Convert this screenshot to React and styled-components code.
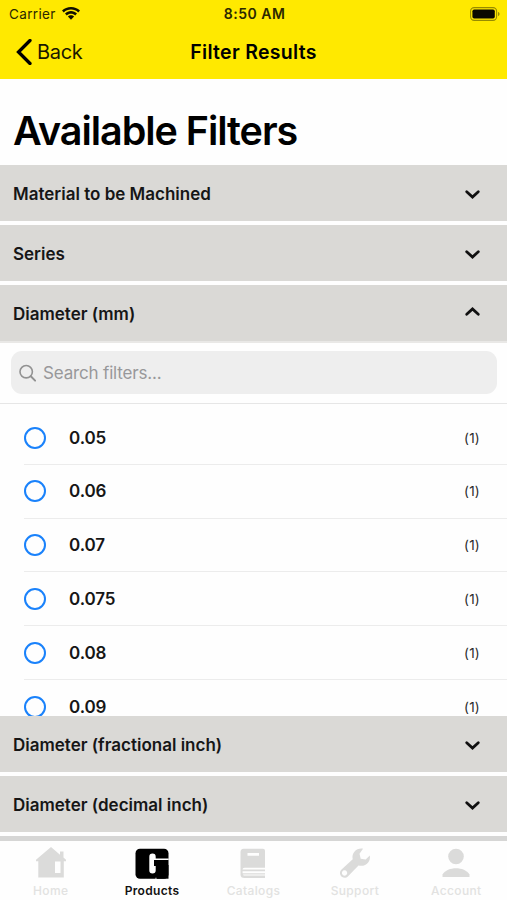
import { useState } from 'react';
import styled, { createGlobalStyle } from 'styled-components';

const GlobalStyle = createGlobalStyle`
  * {
    box-sizing: border-box;
  }
  body {
    margin: 0;
    background: #fff;
    font-family: Inter, 'Liberation Sans', sans-serif;
    color: #000;
  }
`;

const Screen = styled.div`
  width: 507px;
  height: 900px;
  display: flex;
  flex-direction: column;
  overflow: hidden;
  background: #fefefe;
`;

const Header = styled.header`
  height: 79px;
  flex: none;
  background: #ffe900;
`;

const StatusBar = styled.div`
  display: grid;
  grid-template-columns: 1fr auto 1fr;
  align-items: center;
  height: 27px;
  padding: 0 7px 0 9px;
  color: #2b2800;
`;

const Carrier = styled.div`
  display: flex;
  align-items: center;
  gap: 6px;
  font-size: 13.5px;
  letter-spacing: 0.35px;
`;

const Clock = styled.div`
  font-size: 14px;
  font-weight: 600;
  letter-spacing: 0.5px;
`;

const Battery = styled.svg`
  justify-self: end;
`;

const NavBar = styled.nav`
  display: grid;
  grid-template-columns: 1fr auto 1fr;
  align-items: center;
  height: 50px;
  padding: 0 16px;
`;

const BackButton = styled.button`
  display: flex;
  align-items: center;
  justify-self: start;
  gap: 5px;
  padding: 0;
  border: 0;
  background: none;
  font: inherit;
  font-size: 20px;
  letter-spacing: -0.3px;
  color: #1a1800;
`;

const NavTitle = styled.div`
  font-size: 19.5px;
  font-weight: 600;
  letter-spacing: 0.3px;
`;

const Title = styled.h1`
  flex: none;
  height: 86px;
  margin: 0;
  padding: 28px 13px 0;
  font-size: 39.5px;
  line-height: 48px;
  font-weight: 600;
  letter-spacing: -1.05px;
  white-space: nowrap;
`;

const Filters = styled.main`
  flex: 1;
  min-height: 0;
  overflow: hidden;
  display: flex;
  flex-direction: column;
`;

const SectionHeader = styled.button`
  flex: none;
  display: flex;
  align-items: center;
  justify-content: space-between;
  height: 56px;
  margin-bottom: ${(props) => (props.$open ? 0 : 4)}px;
  padding: 1px 26px 0 13px;
  border: 0;
  background: #dad9d6;
  font: inherit;
  font-size: 17px;
  font-weight: 600;
  color: #161616;
`;

const Chevron = styled.svg`
  margin-top: ${(props) => (props.$up ? -3 : 1)}px;
  transform: ${(props) => (props.$up ? 'rotate(180deg)' : 'none')};
`;

const Panel = styled.div`
  flex: none;
  height: 375px;
  overflow: hidden;
  border-top: 2px solid #e9e8e6;
`;

const SearchArea = styled.div`
  height: 61px;
  padding: 8px 10px 0 11px;
  border-bottom: 1px solid #e6e6e6;
`;

const SearchBox = styled.label`
  display: flex;
  align-items: center;
  gap: 7px;
  height: 43px;
  padding: 0 8px;
  border-radius: 11px;
  background: #eee;
`;

const SearchInput = styled.input`
  flex: 1;
  padding: 0;
  border: 0;
  outline: 0;
  background: none;
  font: inherit;
  font-size: 17px;
  letter-spacing: -0.17px;
  &::placeholder {
    color: #98989a;
    opacity: 1;
  }
`;

const OptionList = styled.ul`
  margin: 0;
  padding: 7px 0 0 24px;
  list-style: none;
`;

const Option = styled.li`
  display: flex;
  align-items: center;
  height: 53.8px;
  padding-top: 0.5px;
  padding-right: 27px;
  border-bottom: 1px solid #ececec;
`;

const Radio = styled.span`
  width: 22px;
  height: 22px;
  margin-right: 23px;
  border: 2.4px solid #1a82fb;
  border-radius: 50%;
`;

const OptionLabel = styled.span`
  flex: 1;
  font-size: 17px;
  font-weight: 600;
  letter-spacing: -0.1px;
  color: #161616;
`;

const Count = styled.span`
  font-size: 13.5px;
  letter-spacing: 0.2px;
  color: #2c2c2c;
`;

const TabBar = styled.footer`
  flex: none;
  display: grid;
  grid-template-columns: repeat(5, 1fr);
  height: 64px;
  border-top: 5px solid #d6d6d5;
  background: #fefefe;
`;

const Tab = styled.div`
  display: flex;
  flex-direction: column;
  align-items: center;
  padding-top: 6px;
  gap: 2px;
  font-size: 12px;
  line-height: 15px;
  font-weight: ${(props) => (props.$active ? 600 : 500)};
  letter-spacing: 0.35px;
  color: ${(props) => (props.$active ? '#111' : '#e2e2e1')};
`;

const TabIcon = styled.svg`
  width: 36px;
  height: 34px;
  color: ${(props) => (props.$active ? '#000' : '#dbdbda')};
`;

function WifiIcon() {
  return (
    <svg width="18" height="13" viewBox="0 0 18 13" fill="#111000">
      <path d="M9 0C5.5 0 2.4 1.3 0 3.5l1.8 1.9C3.7 3.6 6.2 2.6 9 2.6s5.3 1 7.2 2.8L18 3.5C15.6 1.3 12.5 0 9 0z" />
      <path d="M9 4.1c-2.3 0-4.4.9-6 2.4l1.8 1.9C5.9 7.3 7.4 6.7 9 6.7s3.1.6 4.2 1.7L15 6.5c-1.6-1.5-3.7-2.4-6-2.4z" />
      <path d="M9 8.3c-1.2 0-2.3.5-3.1 1.2L9 12.8l3.1-3.3C11.3 8.8 10.2 8.3 9 8.3z" />
    </svg>
  );
}

function BatteryIcon() {
  return (
    <Battery width="30" height="14" viewBox="0 0 30 14">
      <rect x="0.6" y="0.6" width="26" height="12.8" rx="3.6" fill="none" stroke="#978b00" strokeWidth="1.1" />
      <rect x="2.4" y="2.4" width="22.4" height="9.2" rx="1.8" fill="#0a0900" />
      <path d="M28 5v4c1-.4 1.5-1.1 1.5-2S29 5.4 28 5z" fill="#978b00" />
    </Battery>
  );
}

const tabs = [
  {
    name: 'Home',
    icon: (
      <path
        fillRule="evenodd"
        d="M18 0L3 12.8v1.5h2.300V30.500h25.500V14.300H33v-1.500l-2.500-2.200V4.500h-3.500v3.200zM22 14.500h5.500v11.500H22z"
      />
    ),
  },
  {
    name: 'Products',
    active: true,
    icon: (
      <>
        <rect x="1.5" y="1.7" width="33" height="30" rx="4.5" />
        <path d="M22 18h12.5v13.7H22z" />
        <path
          fill="#fefefe"
          d="M18.500 6.500q3.200 0 3.200 3.200v1.700h13v1.700H20v6H21.700v4.300q0 3-3.200 3t-3.200-3V9.700q0-3.200 3.200-3.200z"
        />
        <path fill="#fefefe" d="M21.300 31.800l.7-1.500.7 1.500z" />
      </>
    ),
  },
  {
    name: 'Catalogs',
    icon: (
      <path
        fillRule="evenodd"
        d="M8.500 1.700h19.500q2 0 2 2v17H9.500q-2 0-2 1.700H30v1.800H7.600v2H30v1.200H8q.4 1.200 1.800 1.200H30V31H9.500Q5.500 31 5.500 27.500v-22.300q0-3.500 3-3.500zM12.500 6v2.800h11.500V6z"
      />
    ),
  },
  {
    name: 'Support',
    icon: (
      <path
        fillRule="evenodd"
        d="M26 1.700C19.500 .7 14.300 6 15.700 12.200L4.300 22.700c-4.200 4.700 2.300 11 6.800 6.500L21.500 18.500C28.500 20.300 34 15 32.800 8.500L28.700 12.500l-5-.8-1.200-5zM7.500 23.300a2.700 2.700 0 1 0 .1 0z"
      />
    ),
  },
  {
    name: 'Account',
    icon: (
      <>
        <circle cx="18" cy="9.5" r="7.8" />
        <path d="M4.500 30v-2.500C7 23.300 12.500 21.300 18 21.300s11 2 13.500 6.200V30z" />
      </>
    ),
  },
];

const options = ['0.05', '0.06', '0.07', '0.075', '0.08', '0.09'];

const sections = [
  { name: 'Material to be Machined' },
  { name: 'Series' },
  { name: 'Diameter (mm)', options },
  { name: 'Diameter (fractional inch)' },
  { name: 'Diameter (decimal inch)' },
];

function FilterPanel({ options }) {
  const [search, setSearch] = useState('');

  return (
    <Panel>
      <SearchArea>
        <SearchBox>
          <svg width="17" height="18" viewBox="0 0 17 18" fill="none" stroke="#929292" strokeWidth="1.6">
            <circle cx="7.2" cy="7.7" r="6.2" />
            <path d="M11.8 12.3l4.300 4.300" strokeLinecap="round" strokeWidth="2" />
          </svg>
          <SearchInput
            type="text"
            placeholder="Search filters..."
            value={search}
            onChange={(e) => setSearch(e.target.value)}
          />
        </SearchBox>
      </SearchArea>
      <OptionList>
        {options
          .filter((option) => option.includes(search))
          .map((option) => (
            <Option key={option}>
              <Radio />
              <OptionLabel>{option}</OptionLabel>
              <Count>(1)</Count>
            </Option>
          ))}
      </OptionList>
    </Panel>
  );
}

function FilterSection({ section }) {
  const [open, setOpen] = useState(Boolean(section.options));

  return (
    <>
      <SectionHeader $open={open} onClick={() => setOpen(!open)}>
        {section.name}
        <Chevron $up={open} width="17" height="12" viewBox="0 0 17 12" fill="none">
          <path d="M2.7 3.7l5.800 5.300 5.800-5.300" stroke="#111" strokeWidth="2.8" strokeLinecap="round" />
        </Chevron>
      </SectionHeader>
      {open && section.options && <FilterPanel options={section.options} />}
    </>
  );
}

function App() {
  return (
    <>
      <GlobalStyle />
      <Screen>
        <Header>
          <StatusBar>
            <Carrier>
              Carrier
              <WifiIcon />
            </Carrier>
            <Clock>8:50 AM</Clock>
            <BatteryIcon />
          </StatusBar>
          <NavBar>
            <BackButton>
              <svg width="16" height="26" viewBox="0 0 16 26" fill="none" stroke="#000" strokeWidth="3.3">
                <path d="M14 1.500L2.500 13 14 24.500" strokeLinecap="round" />
              </svg>
              Back
            </BackButton>
            <NavTitle>Filter Results</NavTitle>
          </NavBar>
        </Header>
        <Title>Available Filters</Title>
        <Filters>
          {sections.map((section) => (
            <FilterSection key={section.name} section={section} />
          ))}
        </Filters>
        <TabBar>
          {tabs.map((tab) => (
            <Tab key={tab.name} $active={tab.active}>
              <TabIcon $active={tab.active} viewBox="0 0 36 34" fill="currentColor">
                {tab.icon}
              </TabIcon>
              {tab.name}
            </Tab>
          ))}
        </TabBar>
      </Screen>
    </>
  );
}

export default App;
